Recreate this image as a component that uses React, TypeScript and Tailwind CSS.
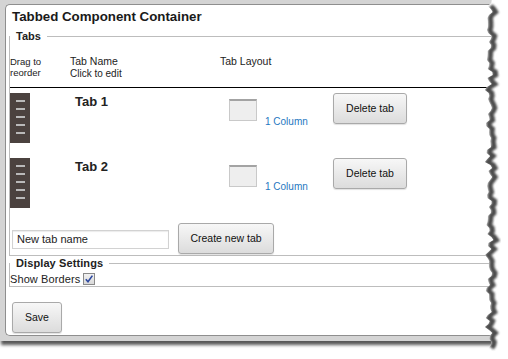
import React from "react";

const edge: [number, number][] = Array.from({ length: 121 }, (_, i) => {
  const y = i * 3;
  const x =
    489 +
    1.8 * Math.sin(y * 0.19) +
    1.4 * Math.sin(y * 0.53 + 1) +
    1.2 * Math.sin(y * 1.41 + 2) +
    0.9 * Math.sin(y * 2.7 + 0.5);
  return [x, y];
});

const rightRegion =
  "M " +
  edge.map(([x, y]) => `${x.toFixed(1)} ${y}`).join(" L ") +
  " L 508 363 L 508 0 Z";

const shadowLine = edge
  .filter(([, y]) => y >= 6 && y <= 348)
  .map(([x, y]) => `${(x + 3).toFixed(1)},${y}`)
  .join(" ");

function Handle() {
  return (
    <div className="w-[20px] h-[50px] bg-[#4b423f] flex flex-col items-center pt-[7px] gap-[6px] shrink-0">
      {[0, 1, 2, 3, 4].map((i) => (
        <div key={i} className="w-[9px] h-[2px] bg-[#b9b9b9]" />
      ))}
    </div>
  );
}

function Btn({ children, className }: { children: React.ReactNode; className: string }) {
  return (
    <button
      className={
        "h-[31px] rounded-[3px] border border-[#a9a9a9] bg-gradient-to-b from-[#f7f7f7] to-[#dcdcdc] text-[10.5px] text-[#111] shadow-[0_1px_1px_rgba(0,0,0,0.12)] shrink-0 " +
        className
      }
    >
      {children}
    </button>
  );
}

function TabRow({ name, boxTop, labelTop }: { name: string; boxTop: string; labelTop: string }) {
  return (
    <div className="flex items-start h-[50px]">
      <Handle />
      <div className="w-[199px] pl-[45px] pt-[1px] text-[13px] leading-[16px] font-bold text-[#222]">{name}</div>
      <div
        className={
          "w-[28px] h-[22px] bg-[#eeeeee] border-x border-b border-[#c9c9c9] border-t-2 border-t-[#a3a3a3] shrink-0 " +
          boxTop
        }
      />
      <div className={"w-[76px] pl-[8px] text-[10px] leading-[12px] text-[#1f78c1] " + labelTop}>1 Column</div>
      <Btn className="w-[74px]">Delete tab</Btn>
    </div>
  );
}

export default function App() {
  return (
    <div className="relative w-[508px] h-[359px] bg-white overflow-hidden font-['Liberation_Sans',Arial,sans-serif]">
      <div className="w-[500px] h-[341px] bg-[#d4d4d4] pt-[4px] pl-[5px] shadow-[0_5px_3px_-1px_rgba(0,0,0,0.65)]">
        <div className="h-[332px] bg-white border border-r-0 border-[#8e8e8e] rounded-l-[5px] flex flex-col">
          <div className="ml-[6px] mt-[4px] text-[13.3px] leading-[16px] font-bold text-[#1a1a1a]">
            Tabbed Component Container
          </div>

          <fieldset className="ml-[3px] mt-[5px] w-[490px] border-t border-l border-b border-[#bdbdbd] pb-[1px]">
            <legend className="px-[6px] text-[11px] leading-[13px] font-bold text-[#222]">Tabs</legend>
            <div className="mt-[12px] flex items-start text-[#222]">
              <div className="w-[60px] text-[9.5px] leading-[11px] pt-[1px]">
                <div>Drag to</div>
                <div>reorder</div>
              </div>
              <div className="w-[150px] text-[10px]">
                <div className="text-[10.5px] leading-[13px]">Tab Name</div>
                <div className="leading-[12px]">Click to edit</div>
              </div>
              <div className="text-[10.5px] leading-[12px]">Tab Layout</div>
            </div>
            <div className="mt-[7px] h-[1px] bg-black" />
            <div className="mt-[5px] flex flex-col gap-[15px]">
              <TabRow name="Tab 1" boxTop="mt-[6px]" labelTop="mt-[23px]" />
              <TabRow name="Tab 2" boxTop="mt-[7px]" labelTop="mt-[23px]" />
            </div>
            <div className="mt-[15px] flex items-start">
              <div className="ml-[2px] mt-[7px] w-[157px] h-[19px] border border-[#d2d2d2] bg-white shadow-[inset_0_1px_1px_rgba(0,0,0,0.08)] pl-[4px] text-[11px] leading-[17px] text-[#222]">
                New tab name
              </div>
              <Btn className="ml-[9px] w-[96px]">Create new tab</Btn>
            </div>
          </fieldset>

          <fieldset className="ml-[3px] mt-[1px] w-[490px] border-t border-l border-b border-[#bdbdbd]">
            <legend className="px-[6px] text-[11px] leading-[13px] font-bold tracking-[0.1px] text-[#222]">
              Display Settings
            </legend>
            <div className="mt-[2px] h-[14px] flex items-center">
              <span className="text-[11px] leading-[14px] tracking-[0.1px] text-[#222]">Show Borders</span>
              <span className="ml-[3px] w-[12px] h-[12px] border border-[#8a8a8a] bg-gradient-to-b from-[#f2f2f2] to-[#d9d9d9] flex items-center justify-center">
                <svg width="10" height="10" viewBox="0 0 10 10">
                  <path d="M1.8 5.2 L4 7.8 L8.4 1.6" fill="none" stroke="#2c48a0" strokeWidth="1.6" />
                </svg>
              </span>
            </div>
          </fieldset>

          <div className="mt-[15px] ml-[6px]">
            <Btn className="w-[50px]">Save</Btn>
          </div>
        </div>
      </div>

      <svg className="absolute top-0 left-0 pointer-events-none" width="508" height="359" viewBox="0 0 508 359">
        <defs>
          <clipPath id="rr">
            <path d={rightRegion} />
          </clipPath>
          <filter id="bl" x="-50%" y="-5%" width="200%" height="110%">
            <feGaussianBlur stdDeviation="1.2" />
          </filter>
        </defs>
        <path d={rightRegion} fill="#ffffff" />
        <g clipPath="url(#rr)">
          <polyline points={shadowLine} fill="none" stroke="#383838" strokeWidth="5" filter="url(#bl)" opacity="0.9" />
        </g>
      </svg>
    </div>
  );
}
